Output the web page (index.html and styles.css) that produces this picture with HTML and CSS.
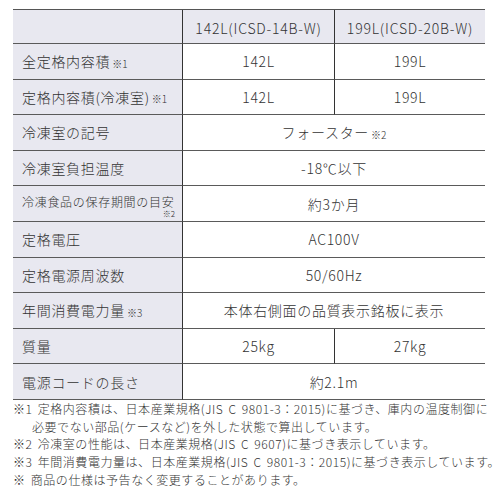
FILE: index.html
```html
<!DOCTYPE html>
<html lang="ja">
<head>
<meta charset="utf-8">
<link rel="stylesheet" href="styles.css">
</head>
<body>
<div class="spec">
  <div class="cell head label"></div>
  <div class="cell head val">142L(ICSD-14B-W)</div>
  <div class="cell head val">199L(ICSD-20B-W)</div>

  <div class="cell label">全定格内容積<span class="note">※1</span></div>
  <div class="cell val">142L</div>
  <div class="cell val">199L</div>

  <div class="cell label">定格内容積(冷凍室)<span class="note">※1</span></div>
  <div class="cell val">142L</div>
  <div class="cell val">199L</div>

  <div class="cell label">冷凍室の記号</div>
  <div class="cell val wide">フォースター<span class="note">※2</span></div>

  <div class="cell label">冷凍室負担温度</div>
  <div class="cell val wide">-18℃以下</div>

  <div class="cell label small">
    <span class="small-text">冷凍食品の保存期間の目安</span>
    <span class="small-note">※2</span>
  </div>
  <div class="cell val wide">約3か月</div>

  <div class="cell label">定格電圧</div>
  <div class="cell val wide">AC100V</div>

  <div class="cell label">定格電源周波数</div>
  <div class="cell val wide">50/60Hz</div>

  <div class="cell label">年間消費電力量<span class="note">※3</span></div>
  <div class="cell val wide">本体右側面の品質表示銘板に表示</div>

  <div class="cell label">質量</div>
  <div class="cell val">25kg</div>
  <div class="cell val">27kg</div>

  <div class="cell label">電源コードの長さ</div>
  <div class="cell val wide">約2.1m</div>
</div>

<div class="notes">
  <p class="fn">※1 定格内容積は、日本産業規格(JIS C 9801-3：2015)に基づき、庫内の温度制御に<br>必要でない部品(ケースなど)を外した状態で算出しています。</p>
  <p class="fn">※2 冷凍室の性能は、日本産業規格(JIS C 9607)に基づき表示しています。</p>
  <p class="fn">※3 年間消費電力量は、日本産業規格(JIS C 9801-3：2015)に基づき表示しています。</p>
  <p class="fn">※ 商品の仕様は予告なく変更することがあります。</p>
</div>
</body>
</html>
```

FILE: styles.css
```css
* { box-sizing: border-box; }

body {
  margin: 0;
  background: #ffffff;
  color: #333333;
  font-family: "Noto Sans CJK JP", "Noto Sans", sans-serif;
  font-weight: 300;
}

.spec {
  display: grid;
  grid-template-columns: 169px 152px 151px;
  grid-template-rows: 34px repeat(10, 35.6px);
  width: 472px;
  margin: 9px 0 0 13px;
  border-top: 1px solid #555555;
}

.cell {
  display: flex;
  align-items: center;
  border-bottom: 1px solid #5a5a5a;
  font-size: 14px;
  letter-spacing: 0.7px;
  white-space: nowrap;
}

.head {
  background: #e8e8f0;
  font-size: 14px;
  letter-spacing: 0.8px;
  padding-top: 2px;
}

.label {
  background: #e8e8f0;
  padding-left: 9px;
}

.val {
  justify-content: center;
  border-left: 1px solid #333333;
}

.wide {
  grid-column: span 2;
}

.note {
  font-size: 10px;
  letter-spacing: 0;
  margin-left: 2px;
  position: relative;
  top: 2px;
}

.small {
  flex-direction: column;
  align-items: stretch;
  justify-content: center;
  padding-right: 7px;
}

.small-text {
  font-size: 12px;
  letter-spacing: 0.7px;
  line-height: 13px;
  padding-top: 5px;
}

.small-note {
  font-size: 8px;
  line-height: 7px;
  text-align: right;
  letter-spacing: 0;
  margin-top: 2px;
}

.notes {
  margin: 0 0 0 13px;
}

.fn {
  margin: 0;
  font-size: 12px;
  line-height: 17.7px;
  padding-left: 19px;
  text-indent: -19px;
  white-space: nowrap;
  letter-spacing: 0.55px;
  word-spacing: 2px;
}
```
